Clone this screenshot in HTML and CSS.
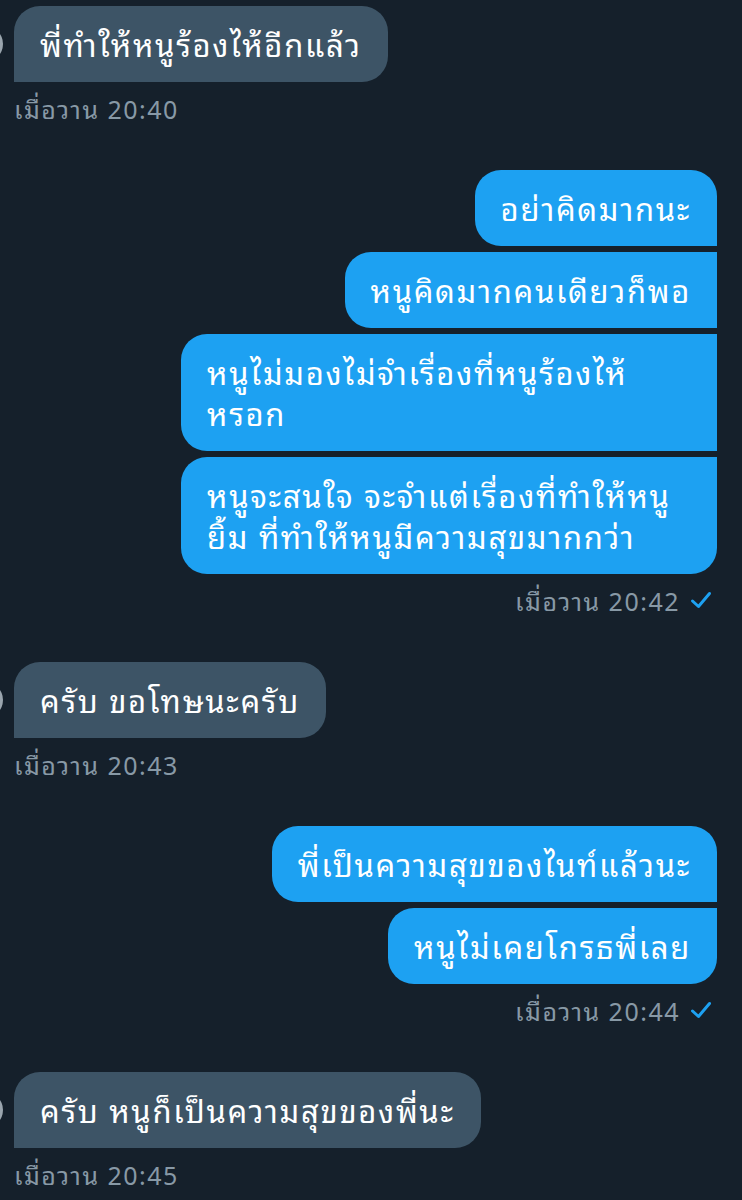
FILE: index.html
```html
<!DOCTYPE html>
<html lang="th">
<head>
    <meta charset="UTF-8">
    <meta name="viewport" content="width=device-width, initial-scale=1.0">
    <title>ข้อความ</title>
    <link rel="stylesheet" href="styles.css">
</head>
<body>
    <div class="chat">
        <div class="group in first">
            <div class="row">
                <span class="avatar"></span>
                <div class="bubble">พี่ทำให้หนูร้องไห้อีกแล้ว</div>
            </div>
            <div class="time">เมื่อวาน 20:40</div>
        </div>

        <div class="group out">
            <div class="bubble top">อย่าคิดมากนะ</div>
            <div class="bubble mid">หนูคิดมากคนเดียวก็พอ</div>
            <div class="bubble mid wide">หนูไม่มองไม่จำเรื่องที่หนูร้องไห้<br>หรอก</div>
            <div class="bubble end wide">หนูจะสนใจ จะจำแต่เรื่องที่ทำให้หนู<br>ยิ้ม ที่ทำให้หนูมีความสุขมากกว่า</div>
            <div class="time">เมื่อวาน 20:42 <svg class="check" width="22" height="18" viewBox="0 0 22 18"><path d="M2.5 10 L8.5 15.5 L19.5 2.5" fill="none" stroke="#1da1f2" stroke-width="3" stroke-linecap="round" stroke-linejoin="round"/></svg></div>
        </div>

        <div class="group in">
            <div class="row">
                <span class="avatar"></span>
                <div class="bubble">ครับ ขอโทษนะครับ</div>
            </div>
            <div class="time">เมื่อวาน 20:43</div>
        </div>

        <div class="group out">
            <div class="bubble top">พี่เป็นความสุขของไนท์แล้วนะ</div>
            <div class="bubble end">หนูไม่เคยโกรธพี่เลย</div>
            <div class="time">เมื่อวาน 20:44 <svg class="check" width="22" height="18" viewBox="0 0 22 18"><path d="M2.5 10 L8.5 15.5 L19.5 2.5" fill="none" stroke="#1da1f2" stroke-width="3" stroke-linecap="round" stroke-linejoin="round"/></svg></div>
        </div>

        <div class="group in">
            <div class="row">
                <span class="avatar"></span>
                <div class="bubble">ครับ หนูก็เป็นความสุขของพี่นะ</div>
            </div>
            <div class="time">เมื่อวาน 20:45</div>
        </div>
    </div>
</body>
</html>
```

FILE: styles.css
```css
body {
    margin: 0;
    padding: 0;
    background: #15202b;
    color: #fff;
    font-family: "Noto Sans Thai Looped", "Noto Sans Thai", "Noto Sans", sans-serif;
}
.chat {
    display: flex;
    flex-direction: column;
    padding: 6px 25px 20px 14px;
}
.group {
    display: flex;
    flex-direction: column;
    gap: 6px;
    margin-top: 47px;
}
.group.first {
    margin-top: 0;
}
.group.in {
    align-items: flex-start;
}
.group.out {
    align-items: flex-end;
}
.row {
    display: flex;
    align-items: center;
}
.avatar {
    width: 36px;
    height: 36px;
    margin-left: -47px;
    margin-right: 11px;
    border-radius: 50%;
    background: #9aa5ae;
}
.bubble {
    font-size: 31px;
    letter-spacing: 1.7px;
    line-height: 41px;
    padding: 17px 26px 18px;
    border-radius: 26px;
}
.bubble.wide {
    box-sizing: border-box;
    width: 536px;
}
.in .bubble {
    background: #3d5466;
    border-bottom-left-radius: 0;
}
.out .bubble {
    background: #1da1f2;
}
.out .bubble.top {
    border-bottom-right-radius: 0;
}
.out .bubble.mid {
    border-top-right-radius: 0;
    border-bottom-right-radius: 0;
}
.out .bubble.end {
    border-top-right-radius: 0;
}
.time {
    display: flex;
    align-items: center;
    gap: 10px;
    color: #8899a6;
    font-size: 25px;
    letter-spacing: 1.5px;
    line-height: 30px;
    margin-top: 5px;
}
.out .time {
    margin-right: 5px;
}
.check {
    display: block;
}
```
